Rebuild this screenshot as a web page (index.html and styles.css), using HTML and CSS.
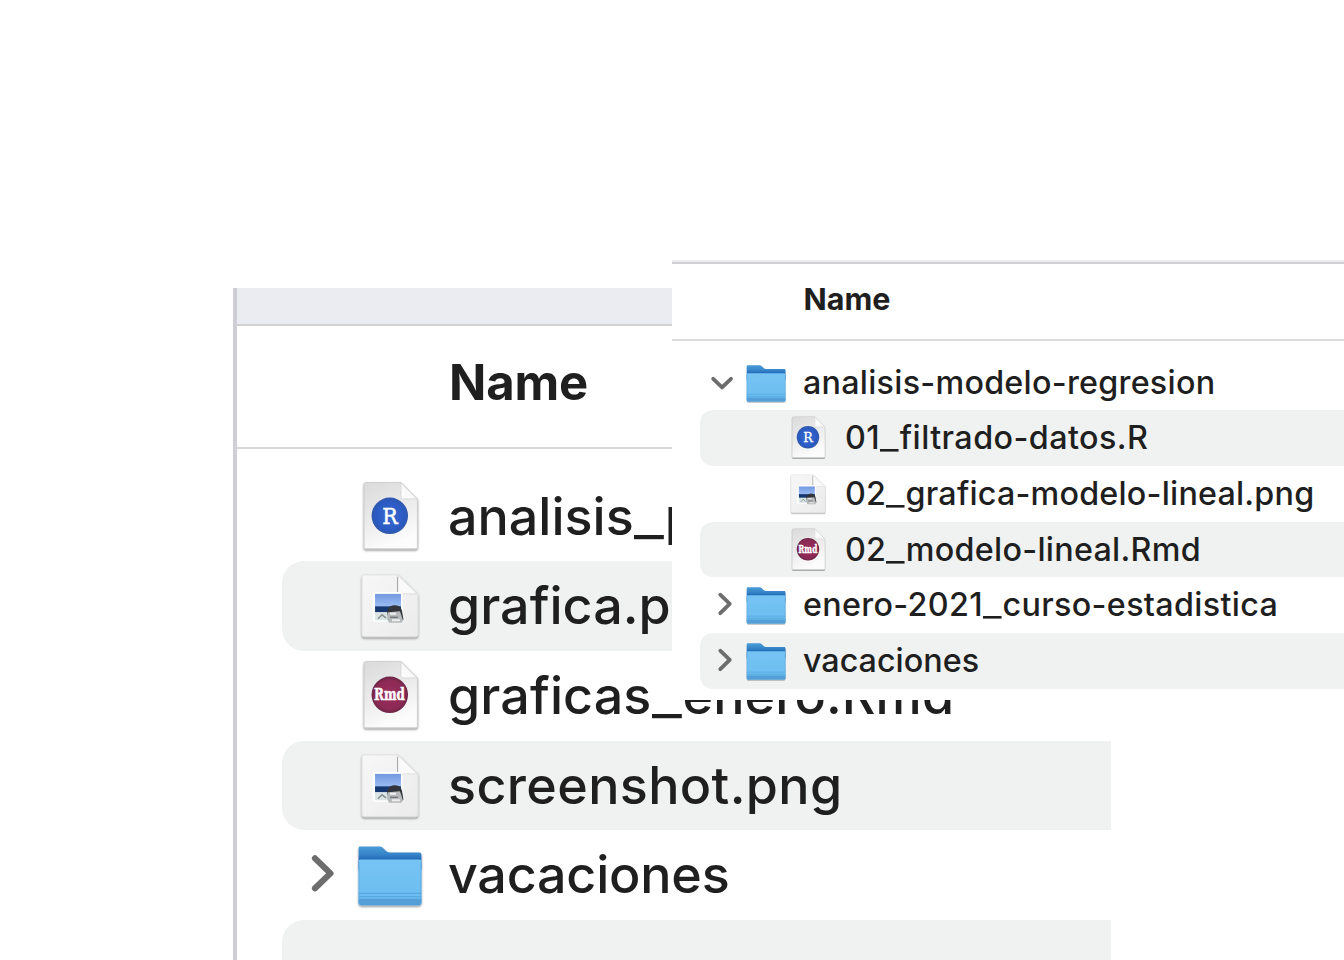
FILE: index.html
```html
<!DOCTYPE html>
<html lang="es">
<head>
<meta charset="utf-8">
<title>Archivos</title>
<link rel="stylesheet" href="styles.css">
</head>
<body>
<svg class="defs" width="0" height="0" aria-hidden="true">
  <defs>
    <linearGradient id="paper" x1="0" y1="0" x2=".35" y2="1"><stop offset="0" stop-color="#dadadb"/><stop offset=".6" stop-color="#ededee"/><stop offset="1" stop-color="#fcfcfc"/></linearGradient>
    <linearGradient id="paper2" x1="0" y1="0" x2="1" y2="1"><stop offset="0" stop-color="#f7f7f7"/><stop offset="1" stop-color="#ebebec"/></linearGradient>
    <linearGradient id="fold" x1="0" y1="1" x2="1" y2="0"><stop offset="0" stop-color="#fff"/><stop offset=".5" stop-color="#f8f8f8"/><stop offset="1" stop-color="#ccc"/></linearGradient>
    <linearGradient id="front" x1="0" y1="0" x2="0" y2="1"><stop offset="0" stop-color="#76c4f4"/><stop offset="1" stop-color="#6bbcf0"/></linearGradient>
    <linearGradient id="back" x1="0" y1="0" x2="0" y2="1"><stop offset="0" stop-color="#4a9cd8"/><stop offset=".35" stop-color="#3584c8"/><stop offset=".6" stop-color="#1d62b6"/></linearGradient>
    <linearGradient id="sky" x1="0" y1="0" x2="0" y2="1"><stop offset="0" stop-color="#7298e0"/><stop offset="1" stop-color="#9fc0f4"/></linearGradient>
    <radialGradient id="blue"><stop offset="0" stop-color="#386ad2"/><stop offset=".8" stop-color="#2b5ac2"/><stop offset="1" stop-color="#3159ab"/></radialGradient>
    <radialGradient id="plum"><stop offset="0" stop-color="#9c315f"/><stop offset=".8" stop-color="#8c2953"/><stop offset="1" stop-color="#6b2848"/></radialGradient>
    <filter id="drop" x="-20%" y="-20%" width="140%" height="140%"><feDropShadow dx="0" dy="1.4" stdDeviation="1.2" flood-color="#000" flood-opacity=".48"/></filter>
    <filter id="soft" x="-10%" y="-10%" width="120%" height="120%"><feGaussianBlur stdDeviation=".55"/></filter>
  </defs>
  <symbol id="page" viewBox="0 0 72 90">
    <path filter="url(#drop)" d="M12 10.5H47L63.5 27V75.5Q63.5 77 62 77H11.500Q10 77 10 75.500V12.500Q10 10.500 12 10.500Z" fill="url(#paper)" stroke="#c6c6c8" stroke-width=".7"/>
    <path d="M47 11V25Q47 27 49 27H63Z" fill="url(#fold)" stroke="#d0d0d0" stroke-width=".7"/>
  </symbol>
  <symbol id="file-r" viewBox="0 0 72 90">
    <use href="#page"/>
    <circle cx="35.800" cy="44" r="18.300" fill="url(#blue)" filter="url(#soft)"/>
    <text class="glyph" x="36" y="52" font-size="21.500" textLength="15.500" lengthAdjust="spacingAndGlyphs">R</text>
  </symbol>
  <symbol id="file-rmd" viewBox="0 0 72 90">
    <use href="#page"/>
    <circle cx="35.800" cy="44" r="18.300" fill="url(#plum)" filter="url(#soft)"/>
    <text class="glyph heavy" x="35.500" y="49.500" font-size="17" textLength="31" lengthAdjust="spacingAndGlyphs">Rmd</text>
  </symbol>
  <symbol id="file-png" viewBox="0 0 72 90">
    <path filter="url(#drop)" d="M10 14H45L64 33V74Q64 76 61.500 76H10.500Q8 76 8 74V16Q8 14 10 14Z" fill="url(#paper2)" stroke="#dcdcdc" stroke-width=".6"/>
    <path d="M44 14.500V31Q44 33 46 33H63.500Z" fill="#fafafa" stroke="#d4d4d4" stroke-width=".7"/>
    <path d="M43.500 16V32" stroke="#aaa" stroke-width="1"/>
    <g filter="url(#soft)">
      <rect x="18.500" y="31" width="30" height="30" rx="2" fill="#fff"/>
      <rect x="21" y="33" width="26" height="14" fill="url(#sky)"/>
      <rect x="21" y="45.500" width="26" height="6" fill="#19396f"/>
      <path d="M21 51.500h14v8H21z" fill="#d9e5e5"/>
      <path d="M24 58l4-4 4 3" fill="none" stroke="#8b918d" stroke-width="1.500"/>
      <path d="M33 50q2-5 7-5.500 7 0 8 5.500l1.500 9-3 1.500-12-1z" fill="#30353a"/>
      <path d="M34 51.500l12-1 3 9-1.500 2.500H35l-2-4z" fill="#b7babb"/>
      <path d="M36 56.500h8" stroke="#777c80" stroke-width="1.500"/>
      <path d="M36 53h6M38 59.500h8" stroke="#eee" stroke-width="2"/>
    </g>
  </symbol>
  <symbol id="folder" viewBox="0 0 72 90">
    <g filter="url(#drop)">
      <path d="M6 16.500H25.500Q27.500 16.500 29 18L32 21Q33.500 22.500 36 22.500H65.500Q67.500 22.500 67.500 24.500V40H4.500V18Q4.500 16.500 6 16.500Z" fill="url(#back)"/>
      <path d="M4.500 31Q4.500 29.500 7 29.500H65Q67.500 29.500 67.500 31V73Q67.500 75.500 65 75.500H7Q4.500 75.500 4.500 73Z" fill="url(#front)"/>
    </g>
    <path d="M4.500 63.500H67.500M4.500 67H67.500" stroke="#4fa4dc" stroke-width="1"/>
    <path d="M4.500 69H67.500V73Q67.500 75.500 65 75.500H7Q4.500 75.500 4.500 73Z" fill="#559fd8"/>
    <path d="M5 32V74M67 32V74" stroke="#5aa8dd" stroke-width=".8"/>
  </symbol>
  <symbol id="chev-right" viewBox="0 0 72 90"><path d="M33 28.500L48.500 43.500L33 58.500"/></symbol>
  <symbol id="chev-down" viewBox="0 0 72 90"><path d="M21.500 38.500L36 52.500L50.500 38.500"/></symbol>
</svg>

<main class="desktop">
  <section class="window window-back">
    <div class="toolbar"></div>
    <header class="columns">Name</header>
    <ul class="list">
      <li class="row"><span class="cell"></span><svg class="cell"><use href="#file-r"/></svg><span class="name b1">analisis<span class="us">_</span>p</span></li>
      <li class="row"><span class="cell"></span><svg class="cell"><use href="#file-png"/></svg><span class="name b2">grafica.png</span></li>
      <li class="row"><span class="cell"></span><svg class="cell"><use href="#file-rmd"/></svg><span class="name b3">graficas<span class="us">_</span>enero.Rmd</span></li>
      <li class="row"><span class="cell"></span><svg class="cell"><use href="#file-png"/></svg><span class="name b4">screenshot.png</span></li>
      <li class="row"><svg class="cell chev"><use href="#chev-right"/></svg><svg class="cell"><use href="#folder"/></svg><span class="name b5">vacaciones</span></li>
      <li class="row"></li>
    </ul>
  </section>

  <section class="window window-front">
    <div class="toolbar"></div>
    <header class="columns">Name</header>
    <ul class="list">
      <li class="row"><svg class="cell chev"><use href="#chev-down"/></svg><svg class="cell"><use href="#folder"/></svg><span class="name f1">analisis-modelo-regresion</span></li>
      <li class="row child"><span class="cell"></span><svg class="cell"><use href="#file-r"/></svg><span class="name f2">01<span class="us">_</span>filtrado-datos.R</span></li>
      <li class="row child"><span class="cell"></span><svg class="cell"><use href="#file-png"/></svg><span class="name f3">02<span class="us">_</span>grafica-modelo-lineal.png</span></li>
      <li class="row child"><span class="cell"></span><svg class="cell"><use href="#file-rmd"/></svg><span class="name f4">02<span class="us">_</span>modelo-lineal.Rmd</span></li>
      <li class="row"><svg class="cell chev"><use href="#chev-right"/></svg><svg class="cell"><use href="#folder"/></svg><span class="name f5">enero-2021<span class="us">_</span>curso-estadistica</span></li>
      <li class="row"><svg class="cell chev"><use href="#chev-right"/></svg><svg class="cell"><use href="#folder"/></svg><span class="name f6">vacaciones</span></li>
    </ul>
  </section>
</main>
</body>
</html>
```
FILE: styles.css
```css
* { box-sizing: border-box; }
body { margin: 0; background: #fff; color: #1f1f1f; font-family: Inter, "Liberation Sans", sans-serif; }
.defs { position: absolute; }
.desktop { position: relative; width: 1344px; height: 960px; overflow: hidden; }
.window { position: absolute; background: #fff; overflow: hidden; }
.toolbar { background: #ebecf2; }
.columns { display: flex; align-items: center; font-weight: 650; }
.list { list-style: none; margin: 0; padding: 0; font-weight: 460; }
.row { display: flex; align-items: center; white-space: nowrap; }
.cell { flex: none; }
.name { padding-bottom: .02em; }
.us { display: inline-block; transform: scaleX(1.26); margin: 0 .075em 0 .065em; font-weight: 400; }
.chev { fill: none; stroke: #6d6d6d; stroke-width: 6.2; stroke-linecap: round; stroke-linejoin: round; }
.glyph { fill: #fff; font-family: "DejaVu Serif", serif; text-anchor: middle; stroke: #fff; stroke-width: .5; }
.heavy { font-weight: 700; }

.window-back { left: 233px; top: 288px; width: 878px; height: 672px; border-left: 4px solid #cfced6; }
.window-back .toolbar { height: 38px; border-bottom: 2px solid #d1d1d4; }
.window-back .columns { height: 122.500px; border-bottom: 2.500px solid #d8d8d9; padding: 0 0 7px 212px; font-size: 49px; letter-spacing: -.2px; }
.window-back .list { padding: 23.200px 0 0 45px; font-size: 52px; }
.window-back .row { height: 89.700px; border-radius: 22px 0 0 22px; }
.window-back .row:nth-child(even) { background: #f0f2f1; }
.window-back .cell { width: 72px; height: 89.700px; }
.window-back .name { padding-left: 22px; }

.window-front { left: 672px; top: 260px; width: 672px; height: 440px; }
.window-front .toolbar { height: 4px; border-bottom: 2px solid #d1d1d4; }
.window-front .columns { height: 76.500px; border-bottom: 2px solid #dadadb; padding: 0 0 5px 131.500px; font-size: 30.500px; }
.window-front .list { padding: 14.200px 0 0 28px; font-size: 32.300px; }
.window-front .row { height: 55.700px; border-radius: 13px 0 0 13px; }
.window-front .row:nth-child(even) { background: #f0f2f1; }
.window-front .cell { width: 44.200px; height: 55.700px; }
.window-front .name { padding-left: 14.600px; }
.window-front .child { padding-left: 42px; }

/* tracking per label */
.b3 { letter-spacing: .1px; }
.b4 { letter-spacing: .38px; }
.b5 { letter-spacing: -.2px; }
.f1 { letter-spacing: .25px; }
.f2 { letter-spacing: .43px; }
.f3 { letter-spacing: .2px; }
.f4 { letter-spacing: .27px; }
.f5 { letter-spacing: .32px; }
```
